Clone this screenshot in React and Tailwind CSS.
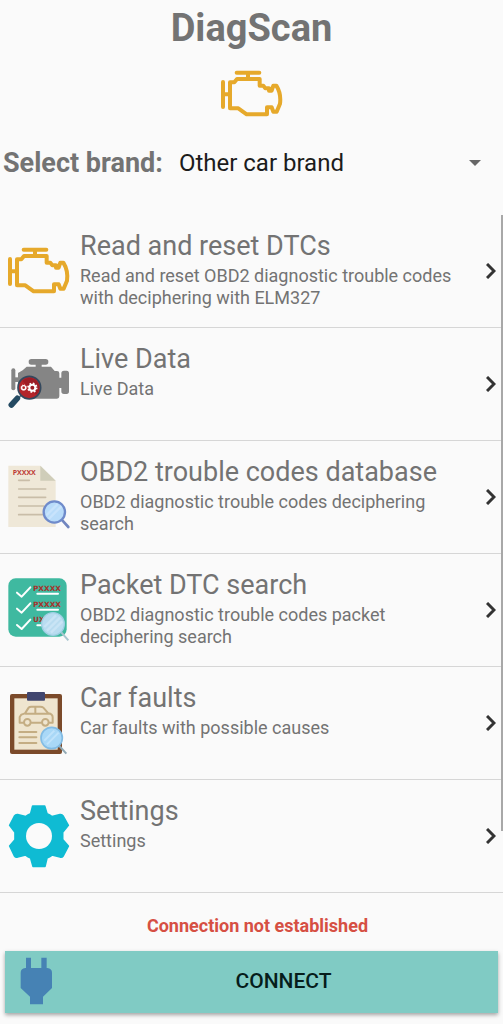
import React, { useState } from "react";

const EngineIcon = () => (
  <svg viewBox="21 27 192 192" className="w-16 h-16 shrink-0" fill="none" stroke="#e6a92b" strokeWidth="12" strokeLinecap="round" strokeLinejoin="round" aria-hidden="true">
    <path d="M71 59H139M105 60V74M30 87V162M30 124H48" />
    <path d="M51 88H64L72 78H140V98H151L157 106H168V113H176L181 98H190Q205 122 201 152L191 176H181L176 163H162V184H101L76 166H51Z" />
  </svg>
);

const LiveDataIcon = () => (
  <svg viewBox="21 21 192 192" className="w-16 h-16 shrink-0" aria-hidden="true">
    <g fill="#858585">
      <rect x="86" y="42" width="59" height="17" rx="8" />
      <rect x="107" y="54" width="18" height="16" />
      <path d="M80 65H153L164 78H171Q178 78 178 85V98H184V85Q184 77 192 77H200Q207 77 207 85V139Q207 147 200 147H192Q184 147 184 139V129H178V154Q178 161 171 161H95L54 120V84L68 76Z" />
      <rect x="34" y="70" width="12" height="66" rx="6" />
      <rect x="44" y="97" width="13" height="14" />
    </g>
    <path d="M63 151L54 162" stroke="#5b7184" strokeWidth="5" />
    <path d="M52 160L34 180" stroke="#244a62" strokeWidth="17" strokeLinecap="round" />
    <circle cx="88" cy="128" r="34" fill="#b3252b" stroke="#34495e" strokeWidth="5" />
    <path d="M88 98A30 30 0 0 1 109 149L67 107A30 30 0 0 1 88 98Z" fill="#9d1d26" />
    <g fill="none" stroke="#fff">
      <circle cx="97" cy="128" r="9" strokeWidth="6" />
      <circle cx="97" cy="128" r="13" strokeWidth="5" strokeDasharray="5 5.2" />
      <circle cx="71" cy="128" r="6" strokeWidth="4" />
      <circle cx="71" cy="128" r="8" strokeWidth="3" strokeDasharray="3 3.3" />
    </g>
  </svg>
);

const DatabaseIcon = () => (
  <svg viewBox="21 30 192 192" className="w-16 h-16 shrink-0" aria-hidden="true">
    <path d="M25 32H121L167 77V216H25Z" fill="#efe8d8" />
    <path d="M121 32L167 77H121Z" fill="#cfcdb9" />
    <text x="38" y="60" fontSize="21" fontWeight="700" fill="#bd3b35" className="font-['Open_Sans',sans-serif]">PXXXX</text>
    <path d="M56 76H88M56 102H137M56 127H137M56 153H132M56 179H132" stroke="#c9bda8" strokeWidth="5" strokeLinecap="round" />
    <path d="M187 196L205 216" stroke="#7186bf" strokeWidth="8" strokeLinecap="round" />
    <circle cx="163" cy="171" r="32" fill="#b9dcfa" stroke="#6f8bcb" strokeWidth="7" />
    <path d="M139 181L173 147M146 192L184 154" stroke="#c8e3fc" strokeWidth="7" />
  </svg>
);

const PacketIcon = () => (
  <svg viewBox="21 39 192 192" className="w-16 h-16 shrink-0" aria-hidden="true">
    <rect x="25" y="40" width="175" height="175" rx="22" fill="#3fb9a0" />
    <g fill="none" stroke="#fff" strokeWidth="6" strokeLinecap="round" strokeLinejoin="round">
      <path d="M51 83L65 95L91 67M51 131L65 143L91 115M51 180L65 192L91 164" />
      <path d="M112 86H174M112 134H174M112 181H130" />
    </g>
    <g fontSize="22" fontWeight="700" fill="#a6322c" className="font-['DejaVu_Sans',sans-serif]">
      <text x="99" y="77">PXXXX</text>
      <text x="99" y="125">PXXXX</text>
      <text x="99" y="172">UX</text>
    </g>
    <path d="M184 202L205 226" stroke="#a9c6cf" strokeWidth="6" />
    <circle cx="159" cy="177" r="34" fill="#b9dcf0" stroke="#9fcfe3" strokeWidth="4" />
    <path d="M133 186L168 151M141 197L180 158M153 203L187 169" stroke="#c9e4f5" strokeWidth="7" />
  </svg>
);

const FaultsIcon = () => (
  <svg viewBox="21 33 192 192" className="w-16 h-16 shrink-0" aria-hidden="true">
    <rect x="30" y="42" width="156" height="180" rx="6" fill="#7b4a2a" />
    <rect x="43" y="55" width="130" height="154" fill="#efe5cf" />
    <rect x="81" y="36" width="54" height="26" rx="3" fill="#41466f" />
    <g fill="none" stroke="#c4ad83" strokeWidth="6" strokeLinejoin="round" strokeLinecap="round">
      <path d="M70 128H59V111L64 104L75 100L86 83Q88 80 94 80H121Q127 80 130 83L145 100Q158 102 158 112V128H149M95 128H123M77 101H145M106 80V101" />
      <circle cx="82" cy="127" r="10" />
      <circle cx="136" cy="127" r="10" />
      <path d="M58 156H109M58 172H109M58 189H109" />
    </g>
    <path d="M178 198L199 221" stroke="#91a9b4" strokeWidth="6" />
    <circle cx="155" cy="174" r="32" fill="#a9d8f7" stroke="#83bce4" strokeWidth="5" />
    <path d="M133 182L163 152M141 193L176 158" stroke="#c0e3fb" strokeWidth="6" />
  </svg>
);

const SettingsIcon = () => (
  <svg viewBox="21 42 192 192" className="w-16 h-16 shrink-0" aria-hidden="true">
    <path
      d="M98 48H134L141 71Q149 74 156 80L180 74Q186 73 190 79L205 106L188 127V149L205 168L190 197Q186 203 180 201L156 195Q149 201 141 204L135 229H99L92 204Q84 201 77 195L53 201Q47 203 43 197L29 168L45 149V127L29 106L43 79Q47 73 53 74L77 80Q84 74 92 71Z"
      fill="#0fbbd3" stroke="#0fbbd3" strokeWidth="5" strokeLinejoin="round"
    />
    <circle cx="117" cy="138" r="39" fill="#fafafa" />
  </svg>
);

const PlugIcon = () => (
  <svg viewBox="15 183 192 192" className="w-16 h-16 shrink-0" fill="#4682b4" aria-hidden="true">
    <path d="M78 206H93V237H124V206H140V237H142Q156 239 156 251V297L129 323V346H90V323L62 297V251Q62 239 76 237H78Z" />
  </svg>
);

const menu = [
  { title: "Read and reset DTCs", text: "Read and reset OBD2 diagnostic trouble codes with deciphering with ELM327", Icon: EngineIcon },
  { title: "Live Data", text: "Live Data", Icon: LiveDataIcon },
  { title: "OBD2 trouble codes database", text: "OBD2 diagnostic trouble codes deciphering search", Icon: DatabaseIcon },
  { title: "Packet DTC search", text: "OBD2 diagnostic trouble codes packet deciphering search", Icon: PacketIcon },
  { title: "Car faults", text: "Car faults with possible causes", Icon: FaultsIcon },
  { title: "Settings", text: "Settings", Icon: SettingsIcon },
];

const App = () => {
  const [brand, setBrand] = useState("Other car brand");

  return (
    <div className="min-h-screen flex flex-col bg-[#fafafa] text-[#737373] font-[Roboto,sans-serif]">

      {/* Header */}
      <header className="flex flex-col items-center">
        <h1 className="text-[38px] leading-[56px] font-bold mb-1.5">DiagScan</h1>
        <EngineIcon />
      </header>

      {/* Brand selector */}
      <div className="flex items-center h-[74px] pl-[3px] mb-[15px]">
        <label htmlFor="brand" className="text-[27px] font-bold shrink-0">Select brand:</label>
        <div className="relative flex-1 ml-4">
          <select
            id="brand"
            value={brand}
            onChange={(e) => setBrand(e.target.value)}
            className="w-full appearance-none bg-transparent text-2xl text-[#1c1c1c]"
          >
            <option>Other car brand</option>
          </select>
          <svg viewBox="0 0 12 6" className="absolute right-[22px] top-1/2 -translate-y-1/2 w-3 h-1.5 pointer-events-none" aria-hidden="true">
            <path d="M0 0H12L6 6Z" fill="#666" />
          </svg>
        </div>
      </div>

      {/* Menu */}
      <nav className="relative">
        <ul>
          {menu.map(({ title, text, Icon }) => (
            <li key={title}>
              <a href="#" className="flex items-center h-[113px] pl-[7px] pr-[7px] border-b border-[#d6d6d6]">
                <Icon />
                <div className="flex-1 self-start pt-3.5 pl-[9px]">
                  <h2 className="text-[27px] leading-[34px] mb-0.5">{title}</h2>
                  <p className="text-lg leading-[22px]">{text}</p>
                </div>
                <svg viewBox="0 0 10 16" className="w-2.5 h-4 shrink-0 ml-4" fill="none" stroke="#333" strokeWidth="3" aria-hidden="true">
                  <path d="M1 1L8 8L1 15" />
                </svg>
              </a>
            </li>
          ))}
        </ul>
        <div className="absolute right-0 top-0 w-0.5 h-10/11 bg-[#a8a8a8]" />
      </nav>

      {/* Connection */}
      <footer className="px-[5px] pb-[10px]">
        <p className="text-center text-lg leading-[22px] font-bold text-[#d64f43] pl-3 pt-[22px] pb-[14px]">Connection not established</p>
        <button className="flex items-center w-full h-[62px] bg-[#80cbc4] text-[#061d1b] text-[21px] font-medium shadow-[0_2px_4px_rgba(0,0,0,0.35)]">
          <PlugIcon />
          <span className="flex-1 text-center">CONNECT</span>
        </button>
      </footer>
    </div>
  );
};

export default App;
